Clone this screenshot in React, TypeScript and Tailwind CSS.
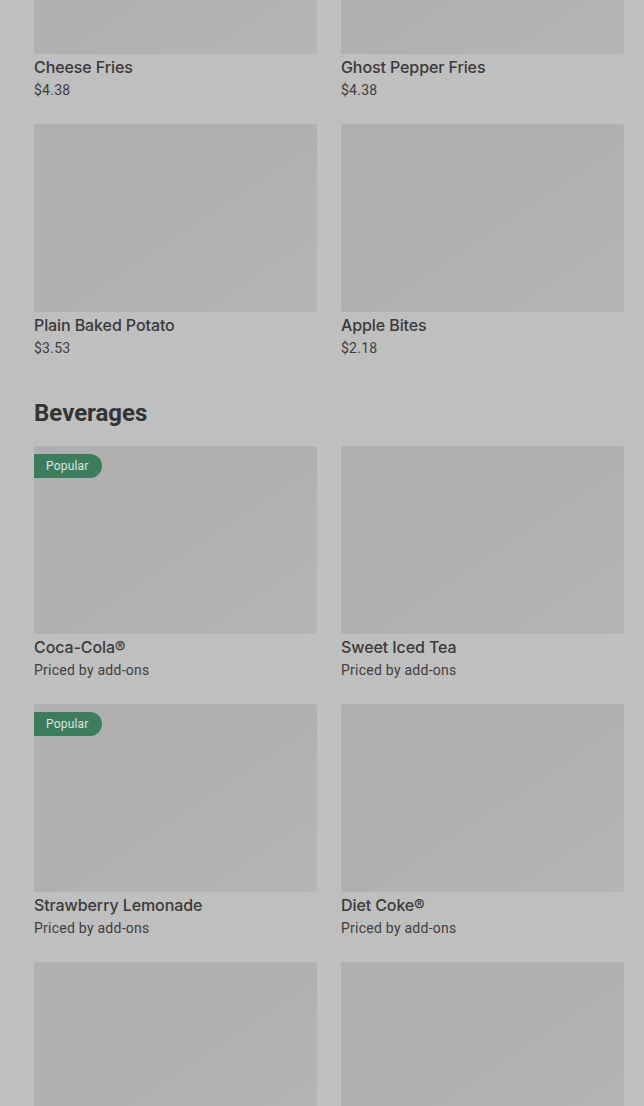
const sides = [
  { name: 'Cheese Fries', price: '$4.38' },
  { name: 'Ghost Pepper Fries', price: '$4.38' },
  { name: 'Plain Baked Potato', price: '$3.53' },
  { name: 'Apple Bites', price: '$2.18' },
]

const beverages = [
  { name: 'Coca-Cola®', price: 'Priced by add-ons', popular: true },
  { name: 'Sweet Iced Tea', price: 'Priced by add-ons' },
  { name: 'Strawberry Lemonade', price: 'Priced by add-ons', popular: true },
  { name: 'Diet Coke®', price: 'Priced by add-ons' },
  { name: 'Sprite®', price: 'Priced by add-ons' },
  { name: 'Dr Pepper®', price: 'Priced by add-ons' },
]

type Item = { name: string; price: string; popular?: boolean }

function MenuCard({ item }: { item: Item }) {
  return (
    <div className="flex flex-col">
      {/* Image placeholder */}
      <div className="relative h-[188px] rounded-[2px] bg-gradient-to-br from-[#afafaf] via-[#b0b0b0] to-[#b5b5b5]">
        {item.popular && (
          <span className="absolute left-0 top-2 flex h-6 items-center rounded-r-full bg-[#3b7d5d] pl-3 pr-[13px] text-[12px] leading-none tracking-[0.2px] text-[#dfe6e2]">
            Popular
          </span>
        )}
      </div>
      <div className="mt-[3px] font-['Inter',sans-serif] text-[16px] font-medium leading-5 tracking-[-0.1px] text-[#3a3a3a]">
        {item.name}
      </div>
      <div className="mt-[3px] mb-6 text-[14px] leading-5 tracking-[0.25px] text-[#3e3e3e]">{item.price}</div>
    </div>
  )
}

export default function App() {
  return (
    <div className="h-[1106px] overflow-hidden bg-[#bfbfbf] font-['Roboto',sans-serif]">
      <div className="mt-[-134px] pl-[34px] pr-5">
        <div className="grid grid-cols-2 gap-x-6">
          {sides.map((item) => (
            <MenuCard key={item.name} item={item} />
          ))}
        </div>

        {/* Beverages */}
        <h2 className="mt-[15px] mb-[17px] text-[24px] font-bold leading-8 text-[#333333]">Beverages</h2>
        <div className="grid grid-cols-2 gap-x-6">
          {beverages.map((item) => (
            <MenuCard key={item.name} item={item} />
          ))}
        </div>
      </div>
    </div>
  )
}
